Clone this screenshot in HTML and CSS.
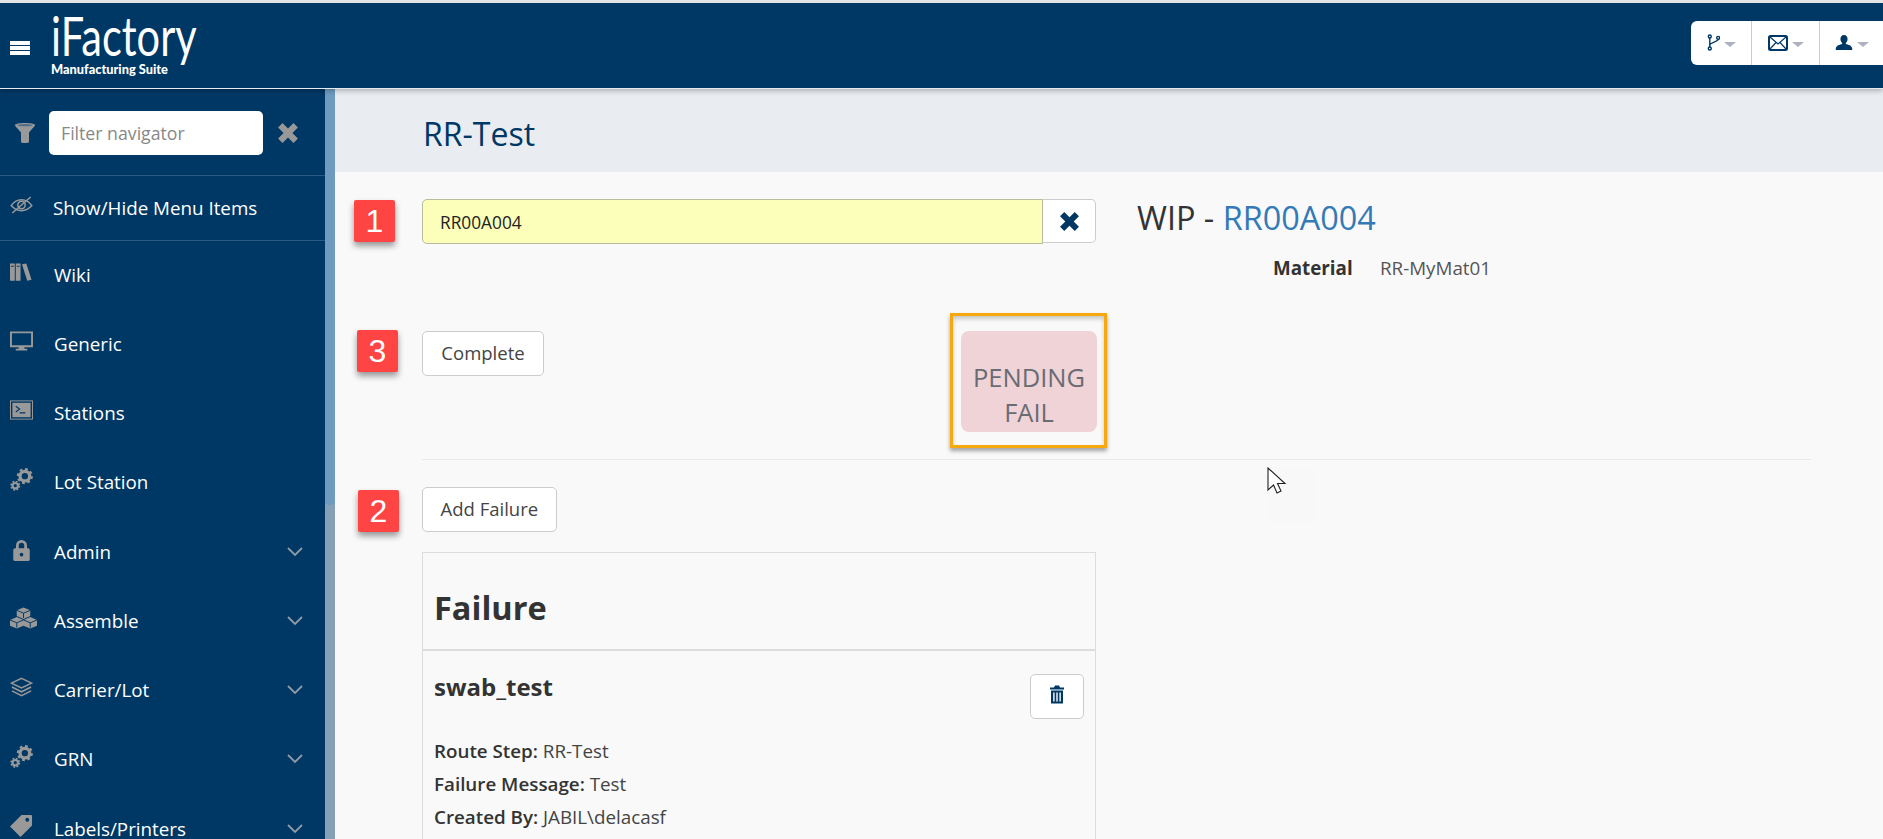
FILE: index.html
```html
<!DOCTYPE html>
<html lang="en">
<head>
<meta charset="utf-8">
<title>RR-Test</title>
<link rel="stylesheet" href="styles.css">
</head>
<body>
<svg class="defs" width="0" height="0">
  <symbol id="gears" viewBox="0 0 24 24">
    <circle cx="15.500" cy="8.500" r="5" fill="none" stroke="#999" stroke-width="3.400"/>
    <circle cx="15.500" cy="8.500" r="7.300" fill="none" stroke="#999" stroke-width="2.200" stroke-dasharray="2.900 2.830"/>
    <circle cx="5.500" cy="18.500" r="2.800" fill="none" stroke="#999" stroke-width="2.200"/>
    <circle cx="5.500" cy="18.500" r="4.400" fill="none" stroke="#999" stroke-width="1.600" stroke-dasharray="1.900 1.555"/>
  </symbol>
  <symbol id="chev" viewBox="0 0 16 10"><path d="M1 1l7 7 7-7" fill="none" stroke="currentColor" stroke-width="1.800"/></symbol>
</svg>

<header class="topbar">
  <div class="brand">
    <svg class="burger" viewBox="0 0 20 14"><path d="M0 0h20v4H0zM0 5h20v4H0zM0 10h20v4H0z" fill="#fff"/></svg>
    <div class="logo">
      <span class="logo-main">iFactory</span>
      <span class="logo-sub">Manufacturing Suite</span>
    </div>
  </div>
  <div class="top-actions">
    <div class="top-btn top-btn-a">
      <svg class="ti" viewBox="0 0 14 18"><g fill="none" stroke="#003865" stroke-width="1.500"><circle cx="3" cy="2.500" r="1.600"/><circle cx="3" cy="15.500" r="1.600"/><circle cx="12" cy="4" r="1.600"/><path d="M3 4.100v9.800M12 5.600c0 3-9 3-9 6.400"/></g></svg>
      <span class="caret"></span>
    </div>
    <div class="top-btn top-btn-b">
      <svg class="ti ti-mail" viewBox="0 0 20 16"><rect x="1" y="1" width="18" height="14" rx="1.500" fill="#fff" stroke="#003865" stroke-width="2"/><path d="M2 2l8 7 8-7M2 14l6-6.500M18 14l-6-6.500" fill="none" stroke="#003865" stroke-width="1.200"/></svg>
      <span class="caret"></span>
    </div>
    <div class="top-btn top-btn-c">
      <svg class="ti ti-user" viewBox="0 0 18 16"><path d="M9 0c2.500 0 3.800 2 3.800 4.200 0 1.800-.8 3.300-1.800 4.200v1.300c2.600.8 6 1.600 6.700 4.300.1.600.1 1.300.1 2H.2c0-.7 0-1.400.1-2 .7-2.700 4.100-3.500 6.700-4.300V8.400C6 7.500 5.200 6 5.200 4.200 5.200 2 6.500 0 9 0z" fill="#003865"/></svg>
      <span class="caret"></span>
    </div>
  </div>
</header>

<div class="shell">
  <aside class="sidebar">
    <nav class="nav">
      <div class="filter">
        <svg class="funnel" viewBox="0 0 20 20"><path d="M0 2c0-1.100 4.500-2 10-2s10 .9 10 2c0 1.500-2.500 3-6 7.500V19c0 .6-1.500 1-4 1s-4-.4-4-1V9.500C2.500 5 0 3.500 0 2z" fill="#999"/><ellipse cx="10" cy="2.200" rx="7.600" ry="1.100" fill="#4d6d88"/></svg>
        <div class="filter-input">Filter navigator</div>
        <svg class="filter-x" viewBox="0 0 20 20"><path d="M1 5l4-4 5 5 5-5 4 4-5 5 5 5-4 4-5-5-5 5-4-4 5-5z" fill="#999"/></svg>
      </div>
      <a class="item item-first">
        <svg class="ic" viewBox="0 0 20 16"><g fill="none" stroke="#999" stroke-width="1.300"><path d="M1 8.500C4 4.500 7 3.500 10 3.500s6 1 9 5c-3 3.500-6 4.500-9 4.500s-6-1-9-4.500z"/><circle cx="10" cy="8" r="3.200"/><path d="M2 15L18 1"/></g></svg>
        <span>Show/Hide Menu Items</span>
      </a>
      <a class="item item-wiki">
        <svg class="ic" viewBox="0 0 24 18"><path d="M0 0h5v18H0zM6 0h5v18H6zM12.500 1l4.500-1 5.500 17-4.500 1z" fill="#999"/><path d="M1 3h3M7 3h3" stroke="#003865"/></svg>
        <span>Wiki</span>
      </a>
      <a class="item">
        <svg class="ic" viewBox="0 0 24 20"><path fill-rule="evenodd" d="M0 0h24v16.500H15v1.500h3v2H6v-2h3v-1.500H0zM2 2v12.500h20V2z" fill="#999"/></svg>
        <span>Generic</span>
      </a>
      <a class="item">
        <svg class="ic" viewBox="0 0 24 20"><rect x=".5" y=".5" width="23" height="19" fill="none" stroke="#999"/><rect x="2.500" y="2.500" width="19" height="15" fill="#999"/><path d="M6 6l4 3-4 3M10 13h6" fill="none" stroke="#003865" stroke-width="1.200"/></svg>
        <span>Stations</span>
      </a>
      <a class="item">
        <svg class="ic ic-gears" viewBox="0 0 24 24"><use href="#gears"/></svg>
        <span>Lot Station</span>
      </a>
      <a class="item">
        <svg class="ic ic-lock" viewBox="0 0 18 24"><path fill-rule="evenodd" d="M3 10V7a6 6 0 0 1 12 0v3h1a2 2 0 0 1 2 2v10a2 2 0 0 1-2 2H2a2 2 0 0 1-2-2V12a2 2 0 0 1 2-2zM6 10h6V7a3 3 0 0 0-6 0z M9 15a2 2 0 1 0 .01 0z" fill="#999"/></svg>
        <span>Admin</span>
        <svg class="chev"><use href="#chev"/></svg>
      </a>
      <a class="item">
        <svg class="ic ic-wide" viewBox="0 0 28 22"><path d="M14 0l7 3v6l-7 3-7-3V3zM7 10l7 3v6l-7 3-7-3v-6zM21 10l7 3v6l-7 3-7-3v-6z" fill="#999"/><path d="M7 3l7 3 7-3M14 6v5M0 13l7 3 7-3M7 16v5M14 13l7 3 7-3M21 16v5" fill="none" stroke="#003865"/></svg>
        <span>Assemble</span>
        <svg class="chev"><use href="#chev"/></svg>
      </a>
      <a class="item">
        <svg class="ic" viewBox="0 0 24 20"><path d="M12 1l10.500 5L12 11 1.500 6zM2 10l10 5 10-5M2 14l10 5 10-5" fill="none" stroke="#999" stroke-width="1.600"/></svg>
        <span>Carrier/Lot</span>
        <svg class="chev"><use href="#chev"/></svg>
      </a>
      <a class="item">
        <svg class="ic ic-gears" viewBox="0 0 24 24"><use href="#gears"/></svg>
        <span>GRN</span>
        <svg class="chev"><use href="#chev"/></svg>
      </a>
      <a class="item">
        <svg class="ic ic-gears" viewBox="0 0 24 24"><path fill-rule="evenodd" d="M12 1h10a1 1 0 0 1 1 1v10L11 24 0 13zM18 4a2 2 0 1 0 .01 0z" fill="#999"/></svg>
        <span>Labels/Printers</span>
        <svg class="chev"><use href="#chev"/></svg>
      </a>
    </nav>
    <div class="scrollbar"><div class="thumb"></div></div>
  </aside>

  <main class="main">
    <div class="page-head"><h1>RR-Test</h1></div>
    <div class="content">
      <div class="grid">
        <div class="scan">
          <div class="scan-input">RR00A004</div>
          <div class="scan-clear"><svg viewBox="0 0 20 20"><path d="M1 5l4-4 5 5 5-5 4 4-5 5 5 5-4 4-5-5-5 5-4-4 5-5z" fill="#003865"/></svg></div>
        </div>
        <div class="wip">
          <h2>WIP - <span class="wip-id">RR00A004</span></h2>
          <dl class="props"><dt>Material</dt><dd>RR-MyMat01</dd></dl>
        </div>
      </div>

      <div class="actions">
        <button class="btn">Complete</button>
        <div class="status">PENDING<br>FAIL</div>
      </div>
      <hr class="rule">

      <button class="btn">Add Failure</button>

      <section class="panel">
        <h3>Failure</h3>
        <div class="failure">
          <div class="failure-head">
            <h4>swab_test</h4>
            <button class="btn-icon">
              <svg viewBox="0 0 14 18"><path fill-rule="evenodd" d="M5 0h4l1 2h4v2H0V2h4zM1 5h12v13H1zM3.200 7v9h1.400V7zM6.300 7v9h1.400V7zM9.400 7v9h1.400V7z" fill="#003865"/></svg>
            </button>
          </div>
          <p><b>Route Step:</b> RR-Test</p>
          <p><b>Failure Message:</b> Test</p>
          <p><b>Created By:</b> JABIL\delacasf</p>
        </div>
      </section>

      <div class="mark mark-1">1</div>
      <div class="mark mark-3">3</div>
      <div class="mark mark-2">2</div>
      <div class="callout"></div>
      <div class="ghost"></div>
      <svg class="cursor" viewBox="0 0 20 28"><path d="M1 1v22l5.500-5 3.500 8 4-2-3.500-7.500H18z" fill="#fff" stroke="#222" stroke-width="1.100"/></svg>
    </div>
  </main>
</div>
</body>
</html>
```
FILE: styles.css
```css
* { box-sizing: border-box; }
html, body { margin: 0; height: 839px; overflow: hidden; }
body { font-family: "Open Sans", "Liberation Sans", sans-serif; font-size: 18.800px; color: #333; background: #f9f9f9; display: flex; flex-direction: column; border-top: 3px solid #e4e4e4; }
.defs { position: absolute; }

.topbar { height: 86px; flex: none; background: #003865; display: flex; align-items: center; justify-content: space-between; border-bottom: 1px solid #e6ebf0; box-shadow: 0 2px 5px rgba(0,0,0,.25); position: relative; z-index: 2; }
.brand { display: flex; align-items: center; padding-left: 10px; }
.burger { width: 20px; height: 14px; margin-top: 4px; }
.logo { display: flex; flex-direction: column; margin-left: 21px; color: #fff; margin-top: -3px; }
.logo-main { font-family: Lato, sans-serif; font-weight: 400; font-size: 54px; line-height: 46px; transform: scaleX(.77); transform-origin: left center; }
.logo-sub { font-family: Lato, sans-serif; font-weight: 900; font-size: 12.800px; line-height: 14px; margin-top: 3px; white-space: nowrap; }
.top-actions { display: flex; height: 44px; background: #fff; border-radius: 6px 0 0 6px; margin-top: -6px; }
.top-btn { display: flex; align-items: center; justify-content: center; gap: 4px; border-right: 1px solid #ccc; }
.top-btn-a { width: 61px; }
.top-btn-b { width: 68px; }
.top-btn-c { width: 63px; border-right: 0; }
.ti { width: 13px; height: 17px; }
.ti-mail { width: 20px; height: 16px; }
.ti-user { width: 18px; height: 15px; }
.caret { width: 0; height: 0; border-left: 6px solid transparent; border-right: 6px solid transparent; border-top: 5px solid #aeb1c2; margin-top: 3px; }

.shell { flex: 1; display: flex; min-height: 0; }
.sidebar { width: 335px; flex: none; display: flex; background: #003865; }
.nav { width: 325px; flex: none; overflow: hidden; }
.filter { height: 87px; display: flex; align-items: center; padding: 2px 0 0 15px; border-bottom: 1px solid #2a5a83; }
.funnel { width: 20px; height: 20px; }
.filter-input { width: 214px; height: 44px; margin-left: 14px; border-radius: 5px; background: #fff; color: #888; display: flex; align-items: center; padding-left: 12px; font-size: 17.700px; }
.filter-x { width: 22px; height: 22px; margin-left: 14px; }
.item { display: flex; align-items: center; height: 69.300px; padding-left: 10px; color: #fff; font-size: 18.800px; position: relative; }
.item-first { height: 65px; border-bottom: 1px solid #2a5a83; }
.item-wiki { height: 68px; }
.item span { margin-left: 21px; }
.item-first span { margin-left: 20px; }
.ic { width: 23px; height: 20px; flex: none; margin-top: -6px; }
.ic-gears { height: 23px; }
.ic-lock { width: 17px; height: 22px; margin: -4px 3px 0 3px; }
.ic-wide { width: 27px; height: 22px; margin-right: -4px; }
.chev { width: 16px; height: 10px; color: #8e9aa6; margin-left: auto; margin-right: 22px; }
.scrollbar { width: 10px; background: #86a0b8; }
.thumb { height: 416px; background: #6f9bc0; border-radius: 0 0 4px 4px; }

.main { flex: 1; min-width: 0; display: flex; flex-direction: column; }
.page-head { height: 83px; flex: none; background: #e9ecf1; display: flex; align-items: center; padding: 6px 0 0 88px; }
h1 { margin: 0; font-weight: 400; font-size: 32px; color: #003865; }
.content { flex: 1; min-height: 0; overflow: hidden; padding: 27px 72px 0 87px; position: relative; }
.grid { display: grid; grid-template-columns: 674px 1fr; column-gap: 41px; height: 132px; }
.scan { display: flex; height: 45px; }
.scan-input { flex: 1; background: #fbffba; border: 1px solid #b9bb9c; border-radius: 5px 0 0 5px; padding: 1px 0 0 17px; display: flex; align-items: center; font-size: 17.300px; color: #222; }
.scan-clear { width: 53px; background: #fff; border: 1px solid #ccc; border-left: 0; border-radius: 0 5px 5px 0; height: 44px; display: flex; align-items: center; justify-content: center; }
.scan-clear svg { width: 21px; height: 21px; }
.wip h2 { margin: -3px 0 0; font-weight: 400; font-size: 32.400px; line-height: 42px; color: #333; }
.wip-id { color: #337ab7; }
.props { display: flex; margin: 18px 0 0 136px; line-height: 24px; }
.props dt { font-weight: 700; width: 107px; }
.props dd { margin: 0; color: #555; }
.btn { display: block; font: inherit; font-size: 18.500px; color: #444; background: #fff; border: 1px solid #ccc; border-radius: 5px; height: 45px; padding: 0 17.500px 2px; }
.actions { display: flex; align-items: flex-start; height: 128px; }
.actions .btn { width: 122px; padding: 0 0 2px; }
.status { width: 136px; height: 101px; margin-left: 417px; border-radius: 8px; background: #efd3d7; color: #6a6c74; text-align: center; font-size: 25.500px; line-height: 35px; padding-top: 29px; }
.rule { margin: 0 0 27px; border: 0; border-top: 1px solid #e9e9e9; }
.panel { width: 674px; min-height: 400px; margin-top: 20px; border: 1px solid #ddd; }
.panel h3 { margin: 0; height: 98px; padding: 33px 11px 0; font-size: 32.500px; line-height: 44px; font-weight: 700; border-bottom: 2px solid #ddd; }
.failure { padding: 12px 11px 0; }
.failure-head { display: flex; justify-content: space-between; align-items: flex-start; height: 61px; margin-top: 11px; }
.failure-head h4 { margin: -4px 0 0; font-size: 24px; line-height: 34px; font-weight: 700; }
.btn-icon { width: 54px; height: 45px; background: #fff; border: 1px solid #ccc; border-radius: 5px; padding: 0; display: flex; align-items: center; justify-content: center; }
.btn-icon svg { width: 14px; height: 19px; margin-top: -4px; }
.failure p { margin: 0; font-size: 18.800px; line-height: 33px; color: #444; }
.failure b { font-weight: 600; color: #333; }

.mark { position: absolute; width: 41px; height: 42px; background: #ff4444; color: #fff; font-family: "Liberation Sans", sans-serif; font-size: 32px; display: flex; align-items: center; justify-content: center; border-radius: 2px; box-shadow: 0 4px 6px rgba(0,0,0,.4); }
.mark-1 { left: 19px; top: 28px; }
.mark-3 { left: 22px; top: 158px; }
.mark-2 { left: 23px; top: 318px; }
.callout { position: absolute; left: 615px; top: 141px; width: 157px; height: 135px; border: 3px solid #f7a80f; box-shadow: 0 3px 4px rgba(0,0,0,.35), inset 0 3px 4px rgba(0,0,0,.2); }
.ghost { position: absolute; left: 932px; top: 295px; width: 48px; height: 56px; background: #f8f8f8; }
.cursor { position: absolute; left: 932px; top: 295px; width: 20px; height: 28px; }
```
